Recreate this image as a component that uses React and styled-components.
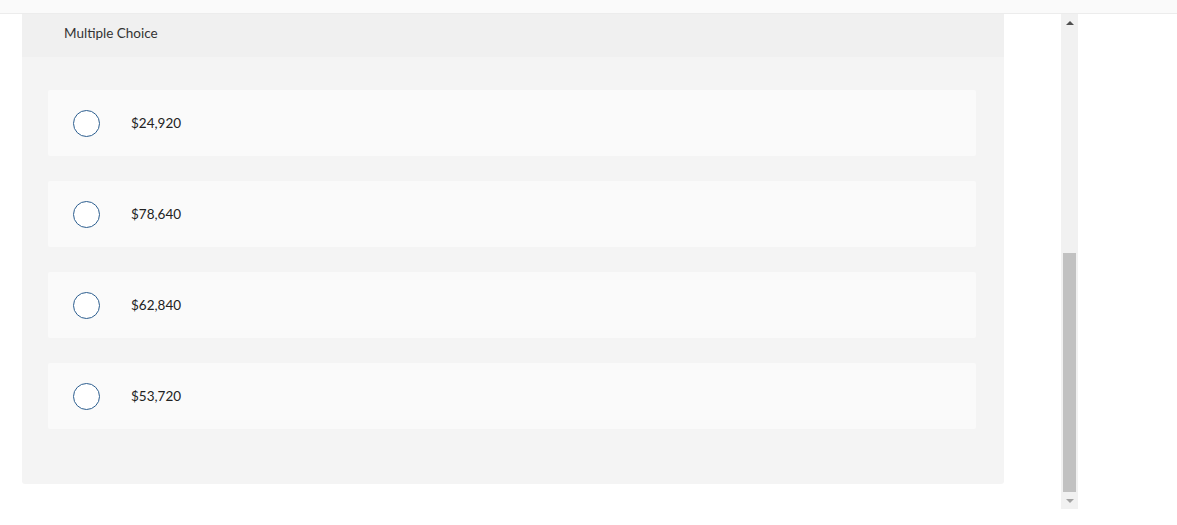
import React from 'react';
import styled, { createGlobalStyle } from 'styled-components'

const Global = createGlobalStyle`
body {
  margin: 0;
  background: #ffffff;
  font-family: Lato, "Open Sans", sans-serif;
}
`

const TopBar = styled.div`
height: 13px;
background-color: #fafafa;
border-bottom: 1px solid #ececec;
`

const Pagina = styled.div`
display: flex;
align-items: flex-start;
`

const Cartao = styled.div`
margin-left: 22px;
width: 982px;
background-color: #f4f4f4;
border-radius: 0 0 3px 3px;
`

const Cabecalho = styled.div`
height: 43px;
box-sizing: border-box;
background-color: #f0f0f0;
display: flex;
align-items: center;
padding: 0 0 5px 42px;
font-size: 13.5px;
color: #333;
`

const ListaOpcoes = styled.div`
display: flex;
flex-direction: column;
gap: 25px;
padding: 33px 28px 55px 26px;
`

const Opcao = styled.div`
height: 66px;
display: flex;
align-items: center;
background-color: #fafafa;
border-radius: 2px;
padding-left: 25px;
`

const Radio = styled.span`
width: 25px;
height: 25px;
border-radius: 50%;
border: 1.5px solid #2c5e8f;
background: #fff;
flex-shrink: 0;
`

const TextoOpcao = styled.span`
margin-left: 31px;
font-size: 13.5px;
color: #222;
`

const BarraRolagem = styled.div`
margin-left: 57px;
width: 17px;
height: 495px;
background-color: #f1f1f1;
display: flex;
flex-direction: column;
align-items: center;
`

const Seta = styled.div`
height: 17px;
width: 17px;
display: flex;
align-items: center;
justify-content: center;
`

const Trilho = styled.div`
flex: 1;
width: 100%;
display: flex;
flex-direction: column;
justify-content: flex-end;
align-items: center;
`

const Polegar = styled.div`
width: 13px;
height: 239px;
background-color: #c1c1c1;
`

const opcoes = ['$24,920', '$78,640', '$62,840', '$53,720']

class App extends React.Component {
  render() {
    return (
      <div>
        <Global />
        <TopBar />
        <Pagina>
          <Cartao>
            <Cabecalho>Multiple Choice</Cabecalho>
            <ListaOpcoes>
              {opcoes.map((valor) => (
                <Opcao key={valor}>
                  <Radio />
                  <TextoOpcao>{valor}</TextoOpcao>
                </Opcao>
              ))}
            </ListaOpcoes>
          </Cartao>
          <BarraRolagem>
            <Seta>
              <svg width="8" height="4" viewBox="0 0 8 4"><path d="M0 4 L4 0 L8 4 Z" fill="#505050" /></svg>
            </Seta>
            <Trilho>
              <Polegar />
            </Trilho>
            <Seta>
              <svg width="8" height="4" viewBox="0 0 8 4"><path d="M0 0 L8 0 L4 4 Z" fill="#a3a3a3" /></svg>
            </Seta>
          </BarraRolagem>
        </Pagina>
      </div>
    )
  }
}

export default App
